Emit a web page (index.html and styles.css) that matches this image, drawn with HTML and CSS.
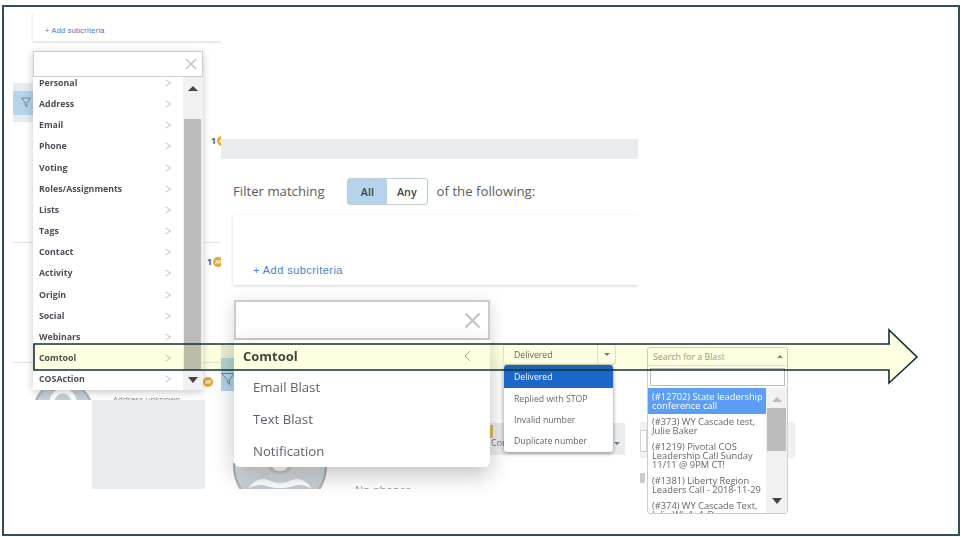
FILE: index.html
```html
<!DOCTYPE html>
<html lang="en">
<head>
<meta charset="utf-8">
<title>Filter criteria</title>
<link rel="stylesheet" href="styles.css">
</head>
<body>
<main class="canvas">
  <section class="shot shot-left">
    <div class="left-card"><a class="add-small">+ Add subcriteria</a></div>
    <div class="filter-strip"><span class="filter-chip"><svg width="10" height="11" viewBox="0 0 10 11"><path d="M.5 1h9L6 5.6v4.2L4 8.3V5.6z" fill="none" stroke="#6b7780" stroke-width=".8"/></svg></span></div>
    <div class="rule rule-a"></div>
    <div class="rule rule-b"></div>
    <div class="count count-a">1<i class="badge">AP</i></div>
    <div class="count count-b">1<i class="badge">AP</i></div>
    <div class="count count-c">1<i class="badge">AP</i></div>
    <svg class="avatar-small" width="62" height="20" viewBox="0 0 62 20"><circle cx="31" cy="31" r="29" fill="#c6ced6" stroke="#a9b3bd" stroke-width="2"/><circle cx="31" cy="22" r="11" fill="none" stroke="#fff" stroke-width="5"/></svg>
    <div class="address">Address unknown</div>
  </section>

  <section class="shot-grey"></section>
  <section class="shot-card"></section>
  <svg class="avatar-large" width="98" height="26" viewBox="0 0 98 26"><defs><linearGradient id="av" x1="0" y1="0" x2="0" y2="1"><stop offset=".5" stop-color="#dfe3e7"/><stop offset="1" stop-color="#a9b4bf"/></linearGradient></defs><circle cx="49" cy="2" r="46" fill="url(#av)" stroke="#a3aeb9" stroke-width="2"/><path d="M49 11c6 0 11-3 12-8H37c1 5 6 8 12 8z" fill="#c3cbd3"/><path d="M49 8c4 0 7-2 8-5H41c1 3 4 5 8 5z" fill="#fff"/><path d="M17 26c5-8 13-12 20-9 8 4 16 4 24 0 7-3 15 1 20 9-6-4-12-5-19-3-9 3-17 3-26 0-7-2-13-1-19 3z" fill="#fff"/></svg>
  <div class="no-phones">No phones</div>

  <section class="shot shot-middle">
    <div class="grey-bar"></div>
    <div class="match-row">
      <span class="match-label">Filter matching</span>
      <span class="toggle"><span class="toggle-on">All</span><span class="toggle-off">Any</span></span>
      <span class="match-tail">of the following:</span>
    </div>
    <div class="mid-card"><a class="add-large">+ Add subcriteria</a></div>
  </section>
  <section class="shot shot-filter-two">
    <span class="filter-two-chip"><svg width="14" height="14" viewBox="0 0 14 14"><path d="M.5 1.5h13L8.5 7.5v5L6 10V7.5z" fill="none" stroke="#6b7780" stroke-width=".9"/></svg></span>
  </section>

  <section class="shot shot-status">
    <div class="status-band"><span class="status-orange"></span><span class="status-con">Con</span><span class="status-caret"></span></div>
  </section>
  <section class="shot shot-band-right"><span class="band-box"></span></section>
  <span class="band-chip"></span>

  <div class="combo combo-left">
    <div class="search search-small"><svg width="12" height="12" viewBox="0 0 12 12"><path d="M1 1l10 10M11 1L1 11" stroke="#c4c4c4" stroke-width="1.5"/></svg></div>
    <div class="menu-wrap">
      <ul class="menu">
        <li>Personal</li><li>Address</li><li>Email</li><li>Phone</li><li>Voting</li>
        <li>Roles/Assignments</li><li>Lists</li><li>Tags</li><li>Contact</li><li>Activity</li>
        <li>Origin</li><li>Social</li><li>Webinars</li><li>Comtool</li><li>COSAction</li>
      </ul>
      <div class="scroll scroll-menu"><span class="up"></span><span class="thumb"></span><span class="down"></span></div>
    </div>
  </div>

  <div class="combo combo-main">
    <div class="search search-large"><svg width="17" height="17" viewBox="0 0 17 17"><path d="M1.5 1.5l14 14M15.5 1.5l-14 14" stroke="#c4c4c4" stroke-width="2.2"/></svg></div>
    <div class="submenu">
      <div class="sub-head"><span>Comtool</span><svg width="7" height="12" viewBox="0 0 7 12"><path d="M6 1L1 6l5 5" fill="none" stroke="#aaa" stroke-width="1"/></svg></div>
      <div class="sub-item">Email Blast</div>
      <div class="sub-item">Text Blast</div>
      <div class="sub-item">Notification</div>
    </div>
  </div>

  <div class="status-drop">
    <div class="select"><span>Delivered</span><span class="select-btn"><i class="caret"></i></span></div>
    <ul class="options">
      <li class="opt-on">Delivered</li>
      <li>Replied with STOP</li>
      <li>Invalid number</li>
      <li>Duplicate number</li>
    </ul>
  </div>

  <div class="blast">
    <div class="blast-select"><span>Search for a Blast</span><i class="caret caret-up"></i></div>
    <div class="blast-search"><span></span></div>
    <div class="blast-list">
      <ul class="blast-items">
        <li class="blast-on">(#12702) State leadership conference call</li>
        <li>(#373) WY Cascade test, Julie Baker</li>
        <li>(#1219) Pivotal COS Leadership Call Sunday 11/11 @ 9PM CT!</li>
        <li>(#1381) Liberty Region Leaders Call - 2018-11-29</li>
        <li>(#374) WY Cascade Text, Julie Wk 1, A-D</li>
      </ul>
      <div class="scroll scroll-blast"><span class="up"></span><span class="thumb"></span><span class="down"></span></div>
    </div>
  </div>

  <svg class="arrow" width="962" height="537" viewBox="0 0 962 537">
    <polygon class="arrow-fill" points="34,344 889,344 889,330 917,357 889,383 889,370 34,370"/>
    <polygon class="arrow-line" points="34,344 889,344 889,330 917,357 889,383 889,370 34,370"/>
  </svg>
  <div class="frame"></div>
</main>
</body>
</html>
```

FILE: styles.css
```css
* { box-sizing: border-box; }
html, body { margin: 0; padding: 0; background: #fff; }
body { font-family: "Open Sans", "Liberation Sans", sans-serif; color: #555; overflow: hidden; }
ul { list-style: none; margin: 0; padding: 0; }
i { font-style: normal; }

.canvas { position: relative; width: 962px; height: 537px; overflow: hidden; filter: blur(.3px); }
.frame { position: absolute; left: 2px; top: 5px; width: 958px; height: 531px; border: 2px solid #2f4f5b; pointer-events: none; }
.shot { position: absolute; overflow: hidden; }

/* left screenshot */
.shot-left { left: 13px; top: 13px; width: 208px; height: 387px; background: #fff; }
.left-card { position: absolute; left: 20px; top: -4px; width: 200px; height: 32px; background: #fff; box-shadow: 0 1px 3px rgba(0,0,0,.16); display: flex; align-items: flex-end; padding: 0 0 5px 12px; }
.add-small { font: 7.3px/10px "Liberation Sans", sans-serif; letter-spacing: .3px; color: #3f73c9; }
.filter-strip { position: absolute; left: 0; top: 70px; width: 20px; height: 39px; background: #e9ecef; display: flex; align-items: center; }
.filter-chip { width: 20px; height: 24px; background: #b3d4ea; display: flex; align-items: center; justify-content: flex-end; padding-right: 2px; }
.rule { position: absolute; left: 0; width: 208px; height: 1px; background: #e3e5e8; }
.rule-a { top: 229px; }
.rule-b { top: 349px; }
.count { position: absolute; display: flex; align-items: center; gap: 1px; font-size: 9px; font-weight: 700; color: #555; }
.count-a { left: 198px; top: 121px; }
.count-b { left: 194px; top: 242px; }
.count-c { left: 184px; top: 362px; }
.badge { width: 10px; height: 10px; border-radius: 50%; background: #e3a62f; color: #fff; font-size: 4.5px; line-height: 10px; text-align: center; flex: none; }
.avatar-small { position: absolute; left: 19px; top: 367px; }
.address { position: absolute; left: 100px; top: 380px; font-size: 8px; line-height: 11px; color: #888; }

/* lower backdrop */
.shot-grey { position: absolute; left: 92px; top: 400px; width: 113px; height: 89px; background: #e9ecef; }
.shot-card { position: absolute; left: 205px; top: 404px; width: 30px; height: 85px; background: #fff; border-radius: 6px 0 0 0; }
.avatar-large { position: absolute; left: 231px; top: 463px; }
.no-phones { position: absolute; left: 355px; top: 482px; height: 7px; overflow: hidden; font-size: 11px; line-height: 15px; color: #999; }

/* middle screenshot */
.shot-middle { left: 221px; top: 139px; width: 417px; height: 155px; background: #fff; }
.grey-bar { height: 20px; background: #e9ecef; }
.match-row { display: flex; align-items: center; margin: 19px 0 0 12px; height: 27px; font-size: 13.2px; color: #5c5c5c; gap: 9px; }
.match-label { margin-right: 13px; padding-bottom: 2px; }
.match-tail { padding-bottom: 2px; }
.toggle { display: flex; width: 81px; height: 27px; border: 1px solid #bfcbd6; border-radius: 3px; font-size: 10.8px; font-weight: 600; color: #444; }
.toggle-on, .toggle-off { flex: 1; display: flex; align-items: center; justify-content: center; padding-bottom: 1px; }
.toggle-on { background: #b3d4ea; }
.mid-card { margin: 10px 0 0 12px; width: 420px; height: 70px; background: #fff; box-shadow: 0 1px 3px rgba(0,0,0,.18); display: flex; align-items: flex-end; padding: 0 0 8px 20px; }
.add-large { font: 11px/14px "Liberation Sans", sans-serif; letter-spacing: .45px; color: #4a7fd6; }
.shot-filter-two { left: 221px; top: 345px; width: 13px; height: 46px; background: #e9ecef; display: flex; align-items: flex-end; }
.filter-two-chip { width: 13px; height: 33px; background: #b3d4ea; display: block; padding-top: 11px; }

/* status row backdrop */
.shot-status { left: 490px; top: 340px; width: 150px; height: 116px; background: #fff; }
.status-band { position: absolute; left: 0; top: 83px; width: 135px; height: 32px; background: #e9ecef; }
.status-orange { position: absolute; left: 0; top: 2px; width: 3px; height: 13px; background: #e3a62f; opacity: .8; }
.status-con { position: absolute; left: 1px; top: 14px; font-size: 9px; line-height: 12px; color: #777; }
.status-caret { position: absolute; right: 5px; top: 19px; border: 3px solid transparent; border-top: 3px solid #777; }
.shot-band-right { left: 640px; top: 422px; width: 155px; height: 36px; background: #eef0f2; }
.band-box { position: absolute; left: 0; top: 8px; width: 7px; height: 22px; border: 1px solid #cfd3d7; background: #fff; }
.band-chip { position: absolute; left: 640px; top: 473px; width: 5px; height: 10px; background: #ccc; }

/* left combobox */
.combo { position: absolute; }
.combo-left { left: 33px; top: 51px; width: 170px; box-shadow: 0 2px 8px rgba(0,0,0,.22); background: #fff; }
.search { background: #fff; display: flex; align-items: center; justify-content: flex-end; }
.search-small { height: 26px; border: 1px solid #ccc; padding-right: 5px; position: relative; z-index: 1; }
.menu-wrap { display: flex; height: 313px; overflow: hidden; }
.menu { flex: 1; margin-top: -4.8px; font-size: 8.8px; font-weight: 700; color: #4d4d58; }
.menu li { height: 21.2px; display: flex; align-items: center; justify-content: space-between; padding: 0 14px 0 6px; }
.menu li::after { content: ""; width: 5px; height: 5px; border-top: 1px solid #c4c4c4; border-right: 1px solid #c4c4c4; transform: rotate(45deg) skew(-10deg, -10deg); }
.scroll { flex: none; background: #f1f1f1; display: flex; flex-direction: column; align-items: center; position: relative; }
.scroll-menu { width: 20px; }
.scroll-menu .thumb { position: absolute; left: 1px; top: 42px; width: 17px; height: 251px; background: #bcbcbc; }
.up, .down { position: absolute; left: 50%; margin-left: -5px; border: 5px solid transparent; }
.up { top: 9px; border-top: 0; border-bottom: 5px solid #444; }
.down { bottom: 7px; border-bottom: 0; border-top: 6px solid #444; }

/* main combobox */
.combo-main { left: 234px; top: 300px; width: 256px; }
.search-large { height: 40px; border: 2px solid #ccc; padding-right: 7px; box-shadow: 0 4px 16px rgba(0,0,0,.18); position: relative; }
.submenu { background: #fff; border-radius: 0 0 6px 6px; height: 127px; box-shadow: 0 8px 22px rgba(0,0,0,.24); position: relative; padding-top: 0; }
.sub-head { height: 31px; display: flex; align-items: center; justify-content: space-between; padding: 0 19px 0 9px; font-size: 13px; font-weight: 700; color: #444; }
.sub-item { height: 32px; display: flex; align-items: center; padding-left: 19px; font-size: 13.2px; color: #5c6270; }

/* status dropdown */
.status-drop { position: absolute; left: 503px; top: 344px; width: 113px; font-size: 8.7px; }
.select { height: 21px; display: flex; align-items: center; justify-content: space-between; border: 1px solid #ddd; border-radius: 3px; padding-left: 10px; background: #fff; color: #666; }
.select-btn { width: 18px; height: 100%; border-left: 1px solid #ddd; display: flex; align-items: center; justify-content: center; }
.caret { display: block; border: 3px solid transparent; border-top: 3px solid #777; border-bottom: 0; }
.caret-up { border-top: 0; border-bottom: 3px solid #888; }
.options { width: 109px; margin-left: 1px; background: #fff; border-radius: 3px; box-shadow: 0 1px 4px rgba(0,0,0,.45); overflow: hidden; }
.options li { height: 21.3px; display: flex; align-items: center; padding-left: 10px; color: #666; }
.options .opt-on { background: #1b66c9; color: #fff; height: 23px; padding-top: 1px; }

/* blast picker */
.blast { position: absolute; left: 647px; top: 347px; width: 141px; height: 167px; background: #fff; border: 1px solid #ccc; border-radius: 3px; font-size: 9.3px; color: #666; }
.blast-select { height: 18px; display: flex; align-items: center; justify-content: space-between; padding: 0 4px 0 5px; border-bottom: 1px solid #e2e2e2; color: #999; font-size: 8.8px; }
.blast-search { padding: 2px 2px; }
.blast-search span { display: block; height: 18px; border: 1px solid #bbb; background: #fff; }
.blast-list { display: flex; height: 125px; overflow: hidden; margin-top: 0; }
.blast-items { flex: 1; line-height: 9px; }
.blast-items li { padding: 3.5px 0 3.5px 4px; }
.blast-items .blast-on { background: #5c9df5; color: #fff; padding: 4px 0 3.5px 4px; }
.scroll-blast { width: 21px; background: #f1f1f1; }
.scroll-blast .thumb { position: absolute; left: 1px; top: 20px; width: 19px; height: 43px; background: #bcbcbc; }
.scroll-blast .up { top: 9px; border-bottom-color: #bbb; }
.scroll-blast .down { bottom: 9px; }

/* callout arrow */
.arrow { position: absolute; left: 0; top: 0; pointer-events: none; }
.arrow-fill { fill: #ffffe2; mix-blend-mode: multiply; }
.arrow-line { fill: none; stroke: #12303d; stroke-width: 1.6; }
```
